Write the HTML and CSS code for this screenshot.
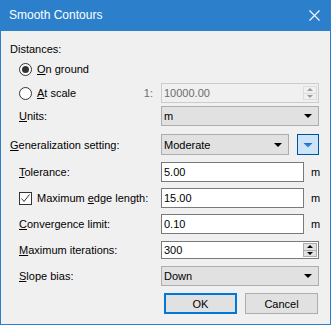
FILE: index.html
```html
<!DOCTYPE html>
<html lang="en">
<head>
  <meta charset="UTF-8" />
  <title>Smooth Contours</title>
  <link rel="stylesheet" href="styles.css">
</head>
<body>
  <div class="window">
    <div class="titlebar">
      <span class="title">Smooth Contours</span>
      <svg class="close" width="11" height="11" viewBox="0 0 11 11">
        <path d="M0.5 0.5 L10.5 10.5 M10.5 0.5 L0.5 10.5" stroke="#fff" stroke-width="1.1" fill="none" />
      </svg>
    </div>

    <div class="content">
      <div class="row row-dist">
        <span class="label">Distances:</span>
      </div>

      <div class="row row-ground">
        <label class="label indent check-label"><span class="radio checked"></span><span><u>O</u>n ground</span></label>
      </div>

      <div class="row row-scale">
        <div class="label indent scale-label">
          <label class="check-label"><span class="radio"></span><span><u>A</u>t scale</span></label>
          <span class="ratio">1:</span>
        </div>
        <div class="field disabled spin-field">
          <span class="value">10000.00</span>
          <span class="spin"><span class="up"></span><span class="down"></span></span>
        </div>
      </div>

      <div class="row row-units">
        <span class="label indent"><u>U</u>nits:</span>
        <div class="combo"><span class="value">m</span><span class="arrow"></span></div>
      </div>

      <div class="row row-gen">
        <span class="label"><u>G</u>eneralization setting:</span>
        <div class="gen-controls">
          <div class="combo"><span class="value">Moderate</span><span class="arrow"></span></div>
          <div class="toggle"><span class="toggle-arrow"></span></div>
        </div>
      </div>

      <div class="row row-field">
        <span class="label indent"><u>T</u>olerance:</span>
        <div class="unit-field"><div class="field"><span class="value">5.00</span></div><span class="unit">m</span></div>
      </div>

      <div class="row row-field">
        <label class="label indent check-label"><span class="checkbox"><svg width="11" height="11" viewBox="0 0 11 11"><path d="M1.5 5.5 L4 8.5 L9.5 1.5" stroke="#333" stroke-width="1" fill="none" /></svg></span><span>Maximum <u>e</u>dge length:</span></label>
        <div class="unit-field"><div class="field"><span class="value">15.00</span></div><span class="unit">m</span></div>
      </div>

      <div class="row row-field">
        <span class="label indent"><u>C</u>onvergence limit:</span>
        <div class="unit-field"><div class="field"><span class="value">0.10</span></div><span class="unit">m</span></div>
      </div>

      <div class="row row-field">
        <span class="label indent"><u>M</u>aximum iterations:</span>
        <div class="field spin-field">
          <span class="value">300</span>
          <span class="spin active"><span class="up"></span><span class="down"></span></span>
        </div>
      </div>

      <div class="row row-slope">
        <span class="label indent"><u>S</u>lope bias:</span>
        <div class="combo"><span class="value">Down</span><span class="arrow"></span></div>
      </div>

      <div class="buttons">
        <button class="btn default">OK</button>
        <button class="btn">Cancel</button>
      </div>
    </div>
  </div>
</body>
</html>
```

FILE: styles.css
```css
* {
  box-sizing: border-box;
  margin: 0;
  padding: 0;
}
body {
  background: #f0f0f0;
  font-family: 'Liberation Sans', Arial, sans-serif;
  font-size: 11px;
  color: #000;
}
.window {
  width: 331px;
  height: 325px;
  background: #f0f0f0;
  border: 1px solid #2b7fcb;
  border-top: none;
}
.titlebar {
  height: 31px;
  margin: 0 -1px;
  background: #2b7fcb;
  display: flex;
  align-items: center;
  justify-content: space-between;
  padding: 0 11px 1px 9px;
}
.title {
  color: #fff;
  font-size: 12px;
}
.close {
  display: block;
}
.content {
  padding: 9px 11px 0 9px;
}
.row {
  display: grid;
  grid-template-columns: 151px 158px;
  align-items: center;
  height: 20px;
}
.row-dist { height: 18px; }
.row-ground { height: 18px; margin-top: 2px; }
.row-scale { margin-top: 5px; }
.row-units { margin-top: 3px; }
.row-gen { height: 21px; margin-top: 8px; }
.row-field { margin-top: 6px; }
.row-gen + .row-field { margin-top: 7px; }
.row-slope { margin-top: 6px; }
.label {
  white-space: nowrap;
}
.indent {
  padding-left: 9px;
}
.check-label {
  display: flex;
  align-items: center;
  gap: 5px;
}
.radio {
  width: 13px;
  height: 13px;
  border: 1px solid #333;
  border-radius: 50%;
  background: #fff;
  display: flex;
  align-items: center;
  justify-content: center;
}
.radio.checked::after {
  content: "";
  width: 7px;
  height: 7px;
  border-radius: 50%;
  background: #333;
}
.checkbox {
  width: 13px;
  height: 13px;
  border: 1px solid #333;
  background: #fff;
  display: flex;
}
.scale-label {
  display: flex;
  align-items: center;
  justify-content: space-between;
  padding-right: 8px;
}
.ratio {
  color: #6d6d6d;
}
.field {
  height: 20px;
  border: 1px solid #7a7a7a;
  background: #fff;
  display: flex;
  align-items: center;
  padding-left: 2px;
}
.field.disabled {
  border-color: #cccccc;
  background: #f0f0f0;
  color: #6d6d6d;
}
.unit-field {
  display: grid;
  grid-template-columns: 143px 15px;
  align-items: center;
}
.unit {
  padding-left: 7px;
}
.spin-field {
  justify-content: space-between;
  padding-right: 1px;
}
.row-field .spin-field {
  height: 18px;
}
.spin {
  width: 14px;
  height: 14px;
  display: flex;
  flex-direction: column;
  border: 1px solid #dcdcdc;
}
.spin.active {
  border-color: #adadad;
  background: #e1e1e1;
}
.spin .up,
.spin .down {
  flex: 1;
  display: flex;
  align-items: center;
  justify-content: center;
}
.spin .up {
  border-bottom: 1px solid #dcdcdc;
}
.spin.active .up {
  border-bottom-color: #adadad;
}
.spin .up::after {
  content: "";
  border-left: 3px solid transparent;
  border-right: 3px solid transparent;
  border-bottom: 3px solid #9a9a9a;
}
.spin .down::after {
  content: "";
  border-left: 3px solid transparent;
  border-right: 3px solid transparent;
  border-top: 3px solid #9a9a9a;
}
.spin.active .up::after { border-bottom-color: #000; }
.spin.active .down::after { border-top-color: #000; }
.combo {
  height: 20px;
  border: 1px solid #adadad;
  background: #e1e1e1;
  display: flex;
  align-items: center;
  justify-content: space-between;
  padding: 0 6px 0 2px;
}
.row-gen .combo {
  height: 21px;
}
.arrow {
  border-left: 4px solid transparent;
  border-right: 4px solid transparent;
  border-top: 4px solid #000;
}
.gen-controls {
  display: grid;
  grid-template-columns: 128px 22px;
  gap: 8px;
}
.toggle {
  height: 21px;
  border: 1px solid #005499;
  background: #cce4f7;
  display: flex;
  align-items: center;
  justify-content: center;
}
.toggle-arrow {
  width: 10px;
  height: 5px;
  margin-top: 1px;
  background: linear-gradient(#1a6fc0, #4a9ae0);
  clip-path: polygon(0 0, 100% 0, 50% 100%);
}
.buttons {
  display: flex;
  justify-content: flex-end;
  gap: 8px;
  margin-top: 7px;
  padding-right: 1px;
}
.btn {
  width: 73px;
  height: 21px;
  border: 1px solid #adadad;
  background: #e1e1e1;
  font-family: 'Liberation Sans', Arial, sans-serif;
  font-size: 11px;
  color: #000;
}
.btn.default {
  border: 2px solid #0078d7;
}
```
